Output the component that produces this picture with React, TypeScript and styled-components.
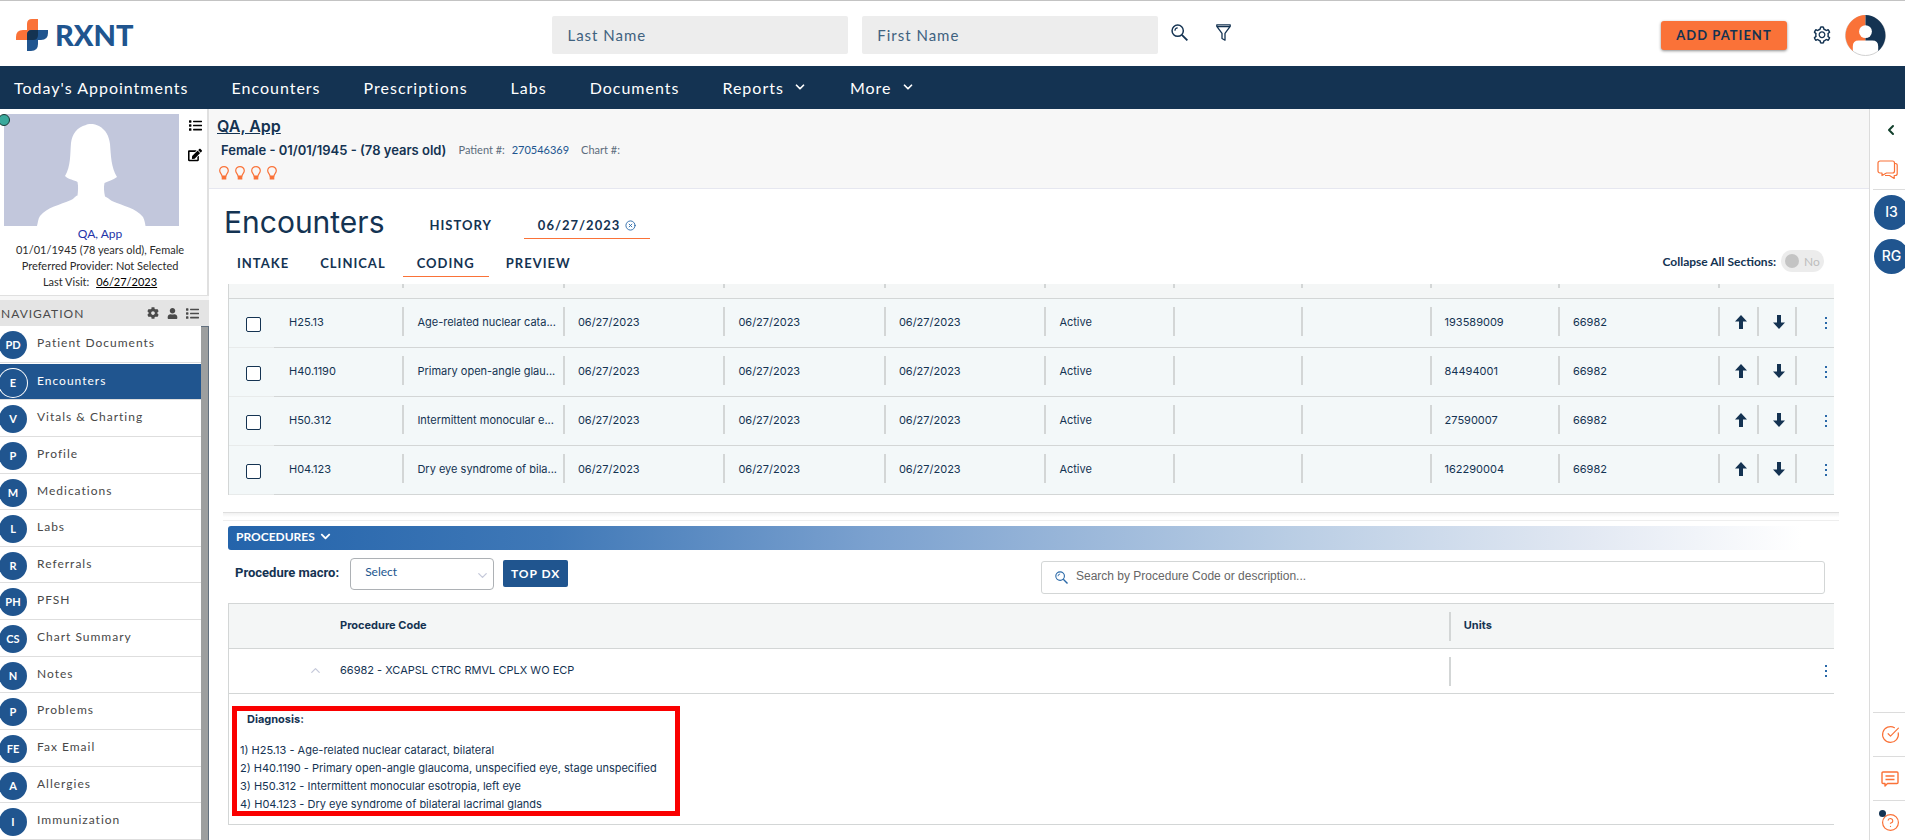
import React from "react";
import styled, { createGlobalStyle } from "styled-components";
import { ChevronDown, ChevronLeft, ChevronUp, CircleCheckBig, CircleHelp, CircleX } from "lucide-react";
import { FaChevronDown, FaCog, FaEdit, FaList, FaUser } from "react-icons/fa";
import { AiOutlineSetting } from "react-icons/ai";

const navy = "#143352";
const blue = "#20558f";
const orange = "#fa7238";
const line = "#d3d6d6";
const lato = 'Lato, "Open Sans", sans-serif';
const inter = 'Inter, "Open Sans", sans-serif';

const GlobalStyle = createGlobalStyle`
  * { box-sizing: border-box; }
  body { margin: 0; background: #fff; color: ${navy}; font-family: ${lato}; font-size: 12px; }
  h1, h2, p, ol, ul { margin: 0; padding: 0; font-weight: 400; }
  ol, ul { list-style: none; }
  a { color: inherit; text-decoration: none; }
  button, input, select { font: inherit; color: inherit; }
  svg { display: block; flex: none; }
`;

/* ---------- page frame ---------- */
const Shell = styled.div`
  display: flex;
  flex-direction: column;
  min-height: 100vh;
  overflow: hidden;
`;
const Body = styled.div`
  flex: 1;
  display: grid;
  grid-template-columns: 209px minmax(0, 1fr) 36px;
`;
const IconButton = styled.button<{ $color?: string }>`
  display: flex;
  align-items: center;
  justify-content: center;
  padding: 0;
  border: 0;
  background: none;
  color: ${(p) => p.$color || navy};
  cursor: pointer;
`;

/* ---------- header ---------- */
const Header = styled.header`
  display: flex;
  align-items: center;
  height: 66px;
  padding-top: 3px;
  border-top: 1px solid #c3c3c3;
`;
const Logo = styled.a`
  flex: 0 0 29%;
  display: flex;
  align-items: center;
  gap: 7px;
  padding-left: 16px;
  color: ${blue};
  font-size: 29px;
  line-height: 32px;
  font-weight: 900;
`;
const Fields = styled.form`
  flex: 0 0 32%;
  display: flex;
  gap: 14px;
  padding-right: 4px;
`;
const NameInput = styled.input`
  flex: 1;
  min-width: 0;
  height: 38px;
  padding: 0 15px;
  border: 0;
  border-radius: 2px;
  background: #ededed;
  font-size: 15px;
  letter-spacing: 1px;
  &::placeholder { color: #3f627f; opacity: 1; }
`;
const HeaderIcons = styled.div`
  display: flex;
  gap: 28px;
  padding: 0 0 5px 9px;
`;
const Account = styled.div`
  display: flex;
  align-items: center;
  margin: 0 19px 0 auto;
`;
const AddButton = styled.button`
  width: 126px;
  height: 29px;
  margin-right: 25px;
  border: 0;
  border-radius: 3px;
  background: ${orange};
  box-shadow: 0 1px 3px rgba(0, 0, 0, 0.45);
  font-size: 13px;
  font-weight: 700;
  letter-spacing: 1px;
`;
const Avatar = styled.div`
  margin-left: 13px;
`;
const NavBar = styled.nav`
  display: flex;
  gap: 43px;
  align-items: center;
  height: 43px;
  padding: 0 0 1px 14px;
  background: ${navy};
  color: #fff;
  font-size: 16px;
  letter-spacing: 1px;
`;
const NavLink = styled.a`
  display: flex;
  align-items: center;
  gap: 9px;
`;

/* ---------- left column ---------- */
const Side = styled.aside`
  display: flex;
  flex-direction: column;
  min-width: 0;
  background: #f7f7f7;
`;
const PatientCard = styled.section`
  position: relative;
  height: 187px;
  padding: 5px 0 0 4px;
  border-right: 2px solid #e0e0e0;
  border-bottom: 1px solid #e0e0e0;
  background: #fff;
`;
const CardTop = styled.div`
  display: flex;
  gap: 9px;
`;
const CardTools = styled.div`
  display: flex;
  flex-direction: column;
  gap: 16px;
  padding-top: 5px;
`;
const Status = styled.span`
  position: absolute;
  left: -2px;
  top: 5px;
  width: 12px;
  height: 12px;
  border: 1px solid #173b35;
  border-radius: 50%;
  background: #3aa99c;
`;
const CardText = styled.div`
  width: 192px;
  color: #2b2b2b;
  font-size: 11px;
  line-height: 16px;
  text-align: center;
`;
const CardName = styled.a`
  display: block;
  color: #2334a8;
  font-size: 12px;
`;
const DateLink = styled.a`
  margin-left: 4px;
  color: #000;
  text-decoration: underline;
`;
const SideHead = styled.div`
  display: flex;
  align-items: center;
  gap: 8px;
  height: 26px;
  margin-top: 4px;
  padding: 0 10px 0 1px;
  background: #e4e4e4;
  color: #4a4a4a;
  letter-spacing: 1px;
`;
const SideTitle = styled.h2`
  flex: 1;
  font-size: 12px;
`;
const SideBody = styled.div`
  flex: 1;
  display: flex;
`;
const SideList = styled.ul`
  flex: 1;
  display: flex;
  flex-direction: column;
  background: #fff;
`;
const SideItem = styled.li<{ $active?: boolean }>`
  flex: 1;
  display: flex;
  min-height: 36px;
  border-bottom: 1px solid #dedede;
  border-top: ${(p) => (p.$active ? "1px solid #fff" : "0")};
  background: ${(p) => (p.$active ? blue : "#fff")};
  color: ${(p) => (p.$active ? "#fff" : "#484848")};
`;
const SideLink = styled.a`
  flex: 1;
  display: flex;
  gap: 10px;
  font-size: 12px;
  line-height: 34px;
  letter-spacing: 1px;
`;
const Badge = styled.span<{ $active?: boolean }>`
  flex: none;
  width: 28px;
  height: 28px;
  margin: 5px 0 0 -1px;
  border-radius: 50%;
  background: ${blue};
  box-shadow: ${(p) => (p.$active ? "0 0 0 1px #fff" : "none")};
  color: #fff;
  font-size: 11px;
  font-weight: 700;
  line-height: 28px;
  letter-spacing: 0;
  text-align: center;
`;
const ScrollTrack = styled.div`
  width: 8px;
  background: #9d9f9f;
  border: solid #62707e;
  border-width: 1px 1px 0 0;
`;

/* ---------- main column ---------- */
const Main = styled.main`
  min-width: 0;
`;
const PatientBar = styled.section`
  height: 80px;
  padding: 7px 0 0 8px;
  border-bottom: 1px solid #e6e7f0;
  background: #f7f7f7;
`;
const PatientName = styled.a`
  display: block;
  font: 600 16px/20px ${inter};
  text-decoration: underline;
`;
const PatientFacts = styled.p`
  display: flex;
  gap: 12px;
  padding: 4px 0 0 4px;
  color: #5c6c7c;
  font: 11px/20px ${lato};
`;
const Strong = styled.b`
  color: ${navy};
  font: 600 13px/20px ${inter};
`;
const PatientNo = styled.a`
  margin-left: 4px;
  color: ${blue};
`;
const Bulbs = styled.div`
  display: flex;
  gap: 6px;
  padding: 6px 0 0 2px;
`;
const Content = styled.div`
  padding: 0 35px 0 19px;
`;
const TitleRow = styled.div`
  display: flex;
  align-items: center;
  height: 50px;
  padding-top: 16px;
`;
const Title = styled.h1`
  margin-right: 31px;
  margin-left: -4px;
  font: 400 30px/33px ${inter};
`;
const Tab = styled.a<{ $active?: boolean }>`
  display: flex;
  align-items: center;
  gap: 5px;
  padding: 0 14px;
  border-bottom: 1px solid ${(p) => (p.$active ? orange : "transparent")};
  font-size: 13px;
  line-height: 26px;
  font-weight: 700;
  letter-spacing: 1px;
`;
const TitleTabs = styled.div`
  display: flex;
  gap: 18px;
  padding-top: 7px;
`;
const TabRow = styled.div`
  display: flex;
  align-items: center;
  justify-content: space-between;
  height: 45px;
  padding: 4px 10px 0 0;
`;
const Tabs = styled.div`
  display: flex;
  gap: 3px;
  margin-left: -5px;
`;
const Collapse = styled.label`
  display: flex;
  align-items: center;
  gap: 5px;
  padding-bottom: 5px;
  font-size: 12px;
  font-weight: 700;
`;
const Toggle = styled.span`
  display: flex;
  align-items: center;
  gap: 5px;
  width: 43px;
  height: 22px;
  padding-left: 4px;
  border-radius: 11px;
  background: #ececec;
  color: #bdbdbd;
  font-weight: 400;
`;
const ToggleInput = styled.input`
  appearance: none;
  width: 14px;
  height: 14px;
  margin: 0;
  border-radius: 50%;
  background: #c4c4c4;
`;

/* ---------- tables ---------- */
const Table = styled.table`
  width: 100%;
  border-collapse: separate;
  border-spacing: 0;
  table-layout: fixed;
  border-left: 1px solid ${line};
  font: 11px/20px ${inter};
`;
const Col = styled.col<{ $w: number }>`
  width: ${(p) => p.$w}%;
`;
const CheckCol = styled.col`
  width: 44px;
`;
const HeadStub = styled.th<{ $bar?: boolean }>`
  height: 15px;
  padding: 0;
  border-bottom: 1px solid ${line};
  background: ${(p) => (p.$bar ? `linear-gradient(${line}, ${line}) 0 0 / 2px 4px no-repeat #f4f6f6` : "#f4f6f6")};
`;
const Cell = styled.td<{ $bar?: boolean; $center?: boolean; $faint?: boolean; $plain?: boolean }>`
  height: ${(p) => (p.$plain ? 45 : 49)}px;
  padding: ${(p) => (p.$center ? "0" : "0 0 2px 15px")};
  white-space: nowrap;
  border-bottom: 1px solid ${(p) => (p.$faint ? "#e8ebeb" : line)};
  background:
    ${(p) => (p.$bar ? `linear-gradient(${line}, ${line}) 0 8px / 2px 29px no-repeat` : "none")}
    ${(p) => (p.$plain ? "" : "#f3f8f9")};
`;
const HeadCell = styled.th<{ $bar?: boolean }>`
  height: 46px;
  padding: 0 0 2px 15px;
  text-align: left;
  font-weight: 700;
  border-top: 1px solid ${line};
  border-bottom: 1px solid ${line};
  background:
    ${(p) => (p.$bar ? `linear-gradient(${line}, ${line}) 0 8px / 2px 29px no-repeat` : "none")} #f4f6f6;
`;
const Center = styled.div`
  display: flex;
  justify-content: center;
  padding: 0 0 2px 6px;
`;
const End = styled.div`
  display: flex;
  justify-content: flex-end;
  padding-right: 6px;
`;
const Check = styled.input`
  appearance: none;
  display: block;
  width: 15px;
  height: 15px;
  margin: 3px 0 0 17px;
  border: 1px solid ${navy};
  border-radius: 2px;
  background: #fff;
`;

/* ---------- procedures ---------- */
const Divider = styled.div`
  height: 9px;
  margin: 17px -5px 5px;
  border-top: 1px solid #dedede;
  border-bottom: 1px solid #eeeeee;
  background: linear-gradient(#f1f1f1, #fff 60%);
`;
const SectionBar = styled.button`
  display: flex;
  align-items: center;
  gap: 5px;
  width: 100%;
  height: 24px;
  padding: 0 0 3px 8px;
  border: 0;
  border-radius: 3px;
  background: linear-gradient(90deg, #2464ab, #3f78b7 20%, #7ba1cf 40%, #b9cde4 66%, #e3e9f3 85%, #fff 98%);
  color: #fff;
  font-size: 12px;
  font-weight: 700;
`;
const Controls = styled.div`
  display: flex;
  align-items: center;
  height: 53px;
  padding: 0 9px 6px 7px;
`;
const MacroLabel = styled.label`
  margin-right: 11px;
  padding-bottom: 2px;
  font: 700 13px/20px Roboto, sans-serif;
`;
const SelectBox = styled.span`
  position: relative;
  width: 144px;
  margin-right: 9px;
  svg { position: absolute; right: 4px; top: 10px; color: #c5c9da; pointer-events: none; }
`;
const Select = styled.select`
  appearance: none;
  width: 100%;
  height: 32px;
  padding: 0 14px 4px;
  border: 1px solid #adb1b5;
  border-radius: 4px;
  background: #fff;
  color: ${blue};
  font-size: 12px;
`;
const TopButton = styled.button`
  width: 65px;
  height: 27px;
  padding: 0 0 1px;
  border: 0;
  border-radius: 2px;
  background: ${blue};
  color: #fff;
  font-size: 12px;
  font-weight: 700;
  letter-spacing: 1px;
`;
const SearchBox = styled.label`
  flex: 0 0 784px;
  display: flex;
  align-items: center;
  gap: 8px;
  height: 33px;
  margin: 7px 0 0 auto;
  padding-left: 13px;
  border: 1px solid ${line};
  border-radius: 3px;
  color: #2a69a8;
`;
const SearchInput = styled.input`
  flex: 1;
  padding: 0 0 2px;
  border: 0;
  outline: 0;
  background: none;
  font: 12px/20px "Liberation Sans", sans-serif;
  &::placeholder { color: #666; opacity: 1; }
`;
const CodeHead = styled(HeadCell)`
  padding-left: 111px;
`;
const CodeCell = styled(Cell)`
  padding-left: 79px;
`;
const CodeLine = styled.div`
  display: flex;
  align-items: center;
  gap: 17px;
`;
const Details = styled.td`
  height: 131px;
  padding: 12px 0 0 3px;
  vertical-align: top;
  border-bottom: 1px solid ${line};
`;
const Callout = styled.div`
  width: fit-content;
  min-width: 448px;
  padding: 0 2px 0 3px;
  border: 5px solid #fa0000;
`;
const CalloutTitle = styled.h2`
  padding: 0 0 14px 7px;
  font: 700 11px/16px ${inter};
`;
const DxList = styled.ol`
  margin-bottom: -2px;
  line-height: 18px;
`;

/* ---------- right rail ---------- */
const Rail = styled.aside`
  display: flex;
  flex-direction: column;
  border-left: 1px solid #dcdcdc;
  overflow: hidden;
`;
const RailTop = styled.div`
  display: flex;
  flex-direction: column;
  align-items: flex-start;
  gap: 22px;
  height: 81px;
  margin-left: 3px;
  padding-top: 13px;
  border-bottom: 1px solid #dcdcdc;
`;
const RailIcon = styled(IconButton)<{ $pad: number }>`
  padding-left: ${(p) => p.$pad}px;
`;
const RailBadge = styled.a`
  flex: none;
  width: 35px;
  height: 35px;
  margin: 5px 0 4px 4px;
  border-radius: 50%;
  background: ${blue};
  color: #fff;
  font: 500 14px/34px ${inter};
  text-align: center;
`;
const RailBottom = styled.div`
  margin: auto 0 -4px 3px;
`;
const RailTool = styled.button`
  position: relative;
  display: flex;
  align-items: center;
  width: 100%;
  height: 44px;
  padding: 0 0 0 8px;
  border: 0;
  border-top: 1px solid #dcdcdc;
  background: none;
  color: ${orange};
`;
const Dot = styled.span`
  position: absolute;
  left: 6px;
  top: 9px;
  width: 7px;
  height: 7px;
  border-radius: 50%;
  background: ${navy};
`;

/* ---------- drawings ---------- */
const LogoMark = () => (
  <svg width="32" height="32" viewBox="0 0 32 32" aria-hidden="true">
    <path d="M11 5q0-5 5-5h6v16q0 5-5 5H0v-3q0-7 7-7h4z" fill={orange} />
    <path d="M11 16q0-5 5-5h16v3q0 7-7 7h-3v4q0 7-7 7h-4z" fill={blue} />
    <path d="M11 16q0-5 5-5h6v5q0 5-5 5h-6z" fill={navy} />
  </svg>
);
const SearchIcon = ({ size }: { size: number }) => (
  <svg width={size} height={size} viewBox="0 0 16 16" fill="none" stroke="currentColor" aria-hidden="true">
    <circle cx="6.3" cy="6.3" r="5.3" strokeWidth="1.4" />
    <path d="M3.7 6.4a2.7 2.7 0 0 1 2.6-2.7" strokeWidth="1.1" />
    <path d="M10.2 10.2l5.2 5.2" strokeWidth="1.7" />
  </svg>
);
const FilterIcon = () => (
  <svg width="15" height="17" viewBox="0 0 15 17" fill="none" stroke="currentColor" strokeWidth="1.3" strokeLinejoin="round" aria-hidden="true">
    <path d="M.8.8h13.4v1.6L9 9.4v6.8l-3-1.7V9.4L.8 2.4zM1 2.6h13" />
  </svg>
);
const AvatarIcon = () => (
  <svg width="41" height="41" viewBox="0 0 42 42" aria-hidden="true">
    <circle cx="21" cy="21" r="20.5" fill="#fff" stroke="#cfcfcf" />
    <path d="M21 0a21 21 0 0 0-13 37V32q0-6 6-6h7z" fill={orange} />
    <path d="M21 0a21 21 0 0 1 13 37V32q0-6-6-6h-7z" fill={navy} />
    <circle cx="21" cy="17" r="6.6" fill="#fff" />
  </svg>
);
const Silhouette = () => (
  <svg width="175" height="112" viewBox="0 0 175 112" role="img" aria-label="Patient photo">
    <path fill="#c2c7dc" d="M0 0h175v112H0z" />
    <path
      fill="#fff"
      d="M82 11c2-1.600 9-1.500 13 1 7 4 10 10 11 18 1 12 1 23 7 33-4 3-9 4-12.500 6-1 4-.5 9 .5 13.500 3 1 4 3 7 4.500 11 5 24 7 31 16 1.500 3 2 6 2.500 9H33c1-4 1-7 3-10 7-9 20-11 31-16 3-1 4-4 6.500-4.500.5-4 1-9 0-13.500-3-2-9-2.500-12.500-6 6-10 5-22 6-33 1-9 6-16 15-18z"
    />
  </svg>
);
const Bulb = () => (
  <svg width="10" height="14" viewBox="0 0 10 14" fill="none" stroke={orange} strokeWidth="1.2" aria-hidden="true">
    <path d="M3 10C3 8 .7 7 .7 4.700a4.300 4.100 0 0 1 8.600 0C9.300 7 7 8 7 10z" />
    <path d="M3.300 10.500h3.400v2.500H3.300z" fill={orange} />
  </svg>
);
const Arrow = ({ down }: { down?: boolean }) => (
  <svg width="12" height="14" viewBox="0 0 12 14" fill={navy} aria-hidden="true">
    <path d={down ? "M6 14l6-6.500H8V0H4v7.500H0z" : "M6 0l6 6.500H8V14H4V6.500H0z"} />
  </svg>
);
const Dots = () => (
  <svg width="3" height="13" viewBox="0 0 3 13" fill="#2a69a8" aria-hidden="true">
    <path d="M0 0h2v2H0zM0 5h2v2H0zM0 10h2v2H0z" />
  </svg>
);
const ChatIcon = () => (
  <svg width="21" height="20" viewBox="0 0 21 20" fill="none" stroke="currentColor" strokeWidth="1.2" strokeLinejoin="round" aria-hidden="true">
    <path d="M3 1h12.500a2 2 0 0 1 2 2v8a2 2 0 0 1-2 2H9.500L5 15.500V13H3a2 2 0 0 1-2-2V3a2 2 0 0 1 2-2z" />
    <path d="M17.800 3.500h.7a1.700 1.700 0 0 1 1.700 1.700v8.300a2 2 0 0 1-2 2h-1v3l-4.700-3H8" />
  </svg>
);
const CommentIcon = () => (
  <svg width="18" height="16" viewBox="0 0 18 16" fill="none" stroke="currentColor" strokeWidth="1.400" strokeLinejoin="round" aria-hidden="true">
    <path d="M2 1h14a1 1 0 0 1 1 1v9.500a1 1 0 0 1-1 1H6.500L4 15v-2.500H2a1 1 0 0 1-1-1V2a1 1 0 0 1 1-1zM4.500 5h9M4.500 8.500h9" />
  </svg>
);

/* ---------- data ---------- */
const sideItems = [
  ["PD", "Patient Documents"], ["E", "Encounters"], ["V", "Vitals & Charting"], ["P", "Profile"],
  ["M", "Medications"], ["L", "Labs"], ["R", "Referrals"], ["PH", "PFSH"], ["CS", "Chart Summary"],
  ["N", "Notes"], ["P", "Problems"], ["FE", "Fax Email"], ["A", "Allergies"], ["I", "Immunization"],
];
const diagnoses = [
  { code: "H25.13", short: "Age-related nuclear cata...", text: "Age-related nuclear cataract, bilateral", snomed: "193589009" },
  { code: "H40.1190", short: "Primary open-angle glau...", text: "Primary open-angle glaucoma, unspecified eye, stage unspecified", snomed: "84494001" },
  { code: "H50.312", short: "Intermittent monocular e...", text: "Intermittent monocular esotropia, left eye", snomed: "27590007" },
  { code: "H04.123", short: "Dry eye syndrome of bila...", text: "Dry eye syndrome of bilateral lacrimal glands", snomed: "162290004" },
];
const day = "06/27/2023";
const columnWidths = [8, 10, 10, 10, 10, 8, 8, 8, 8, 10, 2.4, 2.4, 2.4];

export default function App() {
  return (
    <Shell>
      <GlobalStyle />
      <Header>
        <Logo href="#home"><LogoMark />RXNT</Logo>
        <Fields>
          <NameInput aria-label="Last Name" placeholder="Last Name" />
          <NameInput aria-label="First Name" placeholder="First Name" />
        </Fields>
        <HeaderIcons>
          <IconButton aria-label="Search"><SearchIcon size={17} /></IconButton>
          <IconButton aria-label="Filter"><FilterIcon /></IconButton>
        </HeaderIcons>
        <Account>
          <AddButton>ADD PATIENT</AddButton>
          <IconButton aria-label="Settings"><AiOutlineSetting size={20} /></IconButton>
          <Avatar><AvatarIcon /></Avatar>
        </Account>
      </Header>
      <NavBar>
        {["Today's Appointments", "Encounters", "Prescriptions", "Labs", "Documents"].map((n) => (
          <NavLink key={n} href="#nav">{n}</NavLink>
        ))}
        <NavLink href="#reports">Reports <ChevronDown size={14} strokeWidth={3} /></NavLink>
        <NavLink href="#more">More <ChevronDown size={14} strokeWidth={3} /></NavLink>
      </NavBar>
      <Body>
        <Side>
          <PatientCard>
            <CardTop>
              <Silhouette />
              <CardTools>
                <IconButton $color="#000" aria-label="Patient list"><FaList size={13} /></IconButton>
                <IconButton $color="#000" aria-label="Edit patient"><FaEdit size={14} /></IconButton>
              </CardTools>
            </CardTop>
            <Status />
            <CardText>
              <CardName href="#patient">QA, App</CardName>
              <p>01/01/1945 (78 years old), Female</p>
              <p>Preferred Provider: Not Selected</p>
              <p>Last Visit: <DateLink href="#visit">{day}</DateLink></p>
            </CardText>
          </PatientCard>
          <SideHead>
            <SideTitle>NAVIGATION</SideTitle>
            <FaCog size={12} /><FaUser size={11} /><FaList size={13} />
          </SideHead>
          <SideBody>
            <SideList>
              {sideItems.map(([code, name]) => {
                const active = name === "Encounters";
                return (
                  <SideItem key={name} $active={active}>
                    <SideLink href="#section"><Badge $active={active}>{code}</Badge>{name}</SideLink>
                  </SideItem>
                );
              })}
            </SideList>
            <ScrollTrack />
          </SideBody>
        </Side>

        <Main>
          <PatientBar>
            <PatientName href="#patient">QA, App</PatientName>
            <PatientFacts>
              <Strong>Female - 01/01/1945 - (78 years old)</Strong>
              <span>Patient #: <PatientNo href="#number">270546369</PatientNo></span>
              <span>Chart #:</span>
            </PatientFacts>
            <Bulbs><Bulb /><Bulb /><Bulb /><Bulb /></Bulbs>
          </PatientBar>
          <Content>
            <TitleRow>
              <Title>Encounters</Title>
              <TitleTabs>
                <Tab href="#history">HISTORY</Tab>
                <Tab href="#visit" $active>{day}<CircleX size={11} color="#2a69a8" /></Tab>
              </TitleTabs>
            </TitleRow>
            <TabRow>
              <Tabs>
                {["INTAKE", "CLINICAL", "CODING", "PREVIEW"].map((t) => (
                  <Tab key={t} href="#tab" $active={t === "CODING"}>{t}</Tab>
                ))}
              </Tabs>
              <Collapse>
                Collapse All Sections:
                <Toggle><ToggleInput type="checkbox" />No</Toggle>
              </Collapse>
            </TabRow>
            <Table>
              <colgroup>
                <CheckCol />
                {columnWidths.map((w, i) => <Col key={i} $w={w} />)}
              </colgroup>
              <thead>
                <tr>
                  <HeadStub /><HeadStub />
                  {Array.from({ length: 10 }, (_, i) => <HeadStub key={i} $bar={i < 10} />)}
                  <HeadStub /><HeadStub />
                </tr>
              </thead>
              <tbody>
                {diagnoses.map(({ code, short, text, snomed }) => (
                  <tr key={code}>
                    <Cell $center $faint><Check type="checkbox" aria-label={code} /></Cell>
                    <Cell>{code}</Cell>
                    <Cell $bar title={text}>{short}</Cell>
                    <Cell $bar>{day}</Cell>
                    <Cell $bar>{day}</Cell>
                    <Cell $bar>{day}</Cell>
                    <Cell $bar>Active</Cell>
                    <Cell $bar />
                    <Cell $bar />
                    <Cell $bar>{snomed}</Cell>
                    <Cell $bar>66982</Cell>
                    <Cell $bar $center><Center><IconButton aria-label="Move up"><Arrow /></IconButton></Center></Cell>
                    <Cell $bar $center><Center><IconButton aria-label="Move down"><Arrow down /></IconButton></Center></Cell>
                    <Cell $bar $center><End><IconButton aria-label="More"><Dots /></IconButton></End></Cell>
                  </tr>
                ))}
              </tbody>
            </Table>
            <Divider />
            <SectionBar>PROCEDURES <FaChevronDown size={11} /></SectionBar>
            <Controls>
              <MacroLabel htmlFor="macro">Procedure macro:</MacroLabel>
              <SelectBox>
                <Select id="macro"><option>Select</option></Select>
                <ChevronDown size={15} />
              </SelectBox>
              <TopButton>TOP DX</TopButton>
              <SearchBox>
                <SearchIcon size={13} />
                <SearchInput aria-label="Search procedures" placeholder="Search by Procedure Code or description..." />
              </SearchBox>
            </Controls>
            <Table>
              <colgroup><Col $w={76} /><Col $w={24} /></colgroup>
              <thead>
                <tr><CodeHead>Procedure Code</CodeHead><HeadCell $bar>Units</HeadCell></tr>
              </thead>
              <tbody>
                <tr>
                  <CodeCell $plain>
                    <CodeLine>
                      <IconButton $color="#c5c9da" aria-label="Collapse"><ChevronUp size={15} /></IconButton>
                      66982 - XCAPSL CTRC RMVL CPLX WO ECP
                    </CodeLine>
                  </CodeCell>
                  <Cell $bar $plain $center><End><IconButton aria-label="More"><Dots /></IconButton></End></Cell>
                </tr>
                <tr>
                  <Details colSpan={2}>
                    <Callout>
                      <CalloutTitle>Diagnosis:</CalloutTitle>
                      <DxList>
                        {diagnoses.map(({ code, text }, i) => <li key={code}>{`${i + 1}) ${code} - ${text}`}</li>)}
                      </DxList>
                    </Callout>
                  </Details>
                </tr>
              </tbody>
            </Table>
          </Content>
        </Main>

        <Rail>
          <RailTop>
            <RailIcon $pad={10} $color="#123f2c" aria-label="Collapse panel"><ChevronLeft size={16} strokeWidth={3} /></RailIcon>
            <RailIcon $pad={4} $color={orange} aria-label="Chat"><ChatIcon /></RailIcon>
          </RailTop>
          <RailBadge href="#i3">I3</RailBadge>
          <RailBadge href="#rg">RG</RailBadge>
          <RailBottom>
            <RailTool aria-label="Tasks"><CircleCheckBig size={19} strokeWidth={1.5} /></RailTool>
            <RailTool aria-label="Comments"><CommentIcon /></RailTool>
            <RailTool aria-label="Help"><CircleHelp size={19} strokeWidth={1.5} /><Dot /></RailTool>
          </RailBottom>
        </Rail>
      </Body>
    </Shell>
  );
}
